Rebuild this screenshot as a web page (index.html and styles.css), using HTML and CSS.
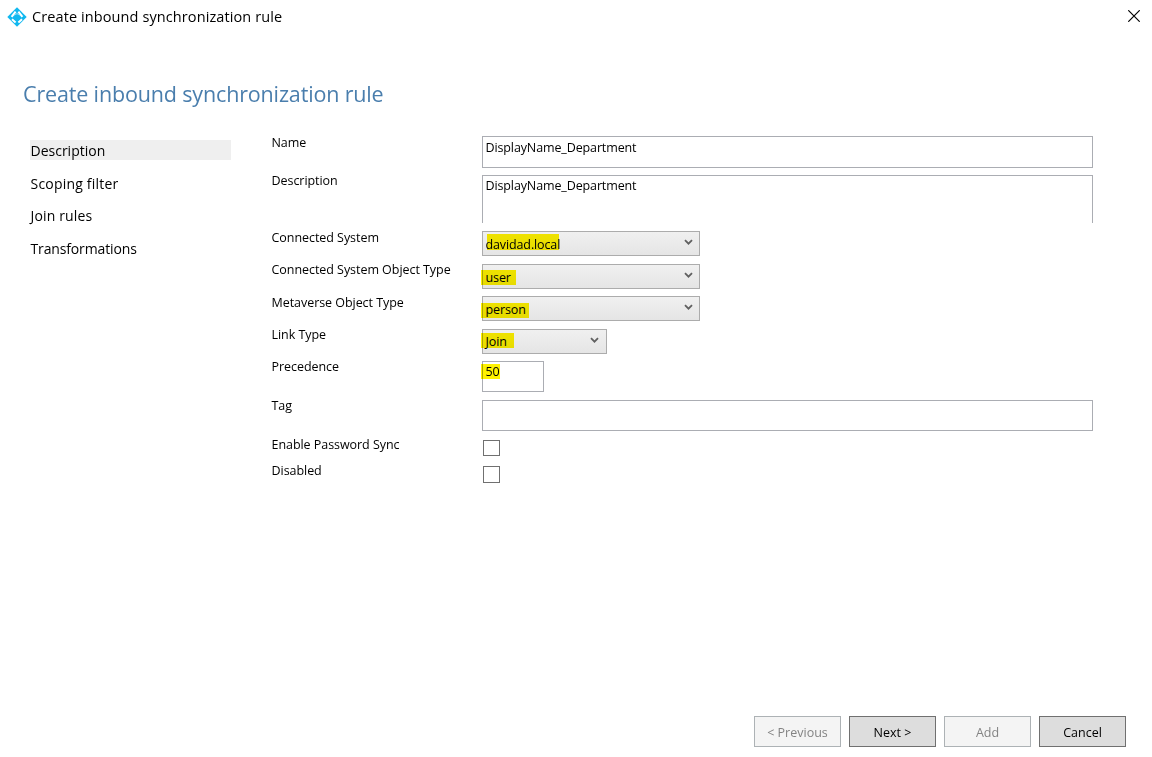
FILE: index.html
```html
<!DOCTYPE html>
<html lang="en">
<head>
    <meta charset="UTF-8">
    <title>Create inbound synchronization rule</title>
    <link rel="stylesheet" href="styles.css">
</head>
<body>
    <div class="window">
        <header class="titlebar">
            <svg class="app-icon" width="20" height="20" viewBox="0 0 20 20">
                <path d="M10 .3 19.7 10 10 19.7 .3 10z" fill="#10b8f0"/>
                <path d="M8.6 4.6 4.6 9.8M11.4 4.6 15.4 9.8M5 12.2l3.6 3.2M15 12.2l-3.6 3.2" stroke="#fff" stroke-width="2" fill="none"/>
                <path d="M7.6 8.4 10 6.8l2.4 1.6" stroke="#fff" stroke-width="1" fill="none"/>
                <circle cx="10" cy="10.2" r="2.9" fill="#10b8f0"/>
            </svg>
            <span class="title">Create inbound synchronization rule</span>
            <svg class="close" width="12" height="12" viewBox="0 0 12 12">
                <path d="M.3.3l11.4 11.4M11.7.3.3 11.7" stroke="#000" stroke-width="1.2"/>
            </svg>
        </header>
        <h1>Create inbound synchronization rule</h1>
        <main>
            <nav>
                <a class="active"><span class="nav-description">Description</span></a>
                <a><span class="nav-scoping">Scoping filter</span></a>
                <a><span class="nav-join">Join rules</span></a>
                <a><span class="nav-transform">Transformations</span></a>
            </nav>
            <div class="form">
                <label>Name</label>
                <div class="input"><span>DisplayName_Department</span></div>
                <label class="up">Description</label>
                <div class="input area"><span>DisplayName_Department</span></div>
                <label>Connected System</label>
                <div class="select mark mark-system"><span>davidad.local</span><svg class="arrow" width="9" height="7" viewBox="0 0 9 7"><path d="M1 1.2 4.5 4.7 8 1.2"/></svg></div>
                <label class="up">Connected System Object Type</label>
                <div class="select mark mark-user"><span>user</span><svg class="arrow" width="9" height="7" viewBox="0 0 9 7"><path d="M1 1.2 4.5 4.7 8 1.2"/></svg></div>
                <label>Metaverse Object Type</label>
                <div class="select mark mark-person"><span>person</span><svg class="arrow" width="9" height="7" viewBox="0 0 9 7"><path d="M1 1.2 4.5 4.7 8 1.2"/></svg></div>
                <label class="up">Link Type</label>
                <div class="select short mark mark-join"><span>Join</span><svg class="arrow" width="9" height="7" viewBox="0 0 9 7"><path d="M1 1.2 4.5 4.7 8 1.2"/></svg></div>
                <label class="up">Precedence</label>
                <div class="input number mark mark-number"><span>50</span></div>
                <label class="up">Tag</label>
                <div class="input tag"></div>
                <label class="up2">Enable Password Sync</label>
                <div class="checkbox sync"></div>
                <label class="up2">Disabled</label>
                <div class="checkbox"></div>
            </div>
        </main>
        <footer>
            <button disabled>&lt; Previous</button>
            <button>Next &gt;</button>
            <button disabled>Add</button>
            <button>Cancel</button>
        </footer>
    </div>
</body>
</html>
```

FILE: styles.css
```css
* {
    margin: 0;
    padding: 0;
    box-sizing: border-box;
}
body {
    font-family: "Open Sans", sans-serif;
    font-size: 12.5px;
    color: #000;
    background: #fff;
}
.window {
    display: flex;
    flex-direction: column;
    width: 1152px;
    height: 757px;
    overflow: hidden;
}
.titlebar {
    display: flex;
    align-items: center;
    height: 33px;
    padding: 0 12px 0 7px;
}
.title {
    margin-left: 5px;
    font-size: 14.5px;
    letter-spacing: 0.1px;
    white-space: nowrap;
}
.close {
    margin: -1px 0 0 auto;
}
h1 {
    height: 32px;
    margin: 45px 0 0 23px;
    font-size: 21.5px;
    font-weight: 400;
    line-height: 32px;
    letter-spacing: -0.15px;
    color: #4a7ead;
}
main {
    display: flex;
    flex: 1;
    padding: 26px 0 0 30px;
}
nav {
    display: flex;
    flex-direction: column;
    gap: 12.6px;
    width: 201px;
    margin: 4px 40.5px 0 0;
}
nav a {
    height: 20px;
    padding-left: 0.5px;
    font-size: 14px;
    line-height: 22px;
}
.nav-scoping {
    letter-spacing: 0.2px;
}
.nav-join {
    letter-spacing: 0.15px;
}
.nav-transform {
    letter-spacing: -0.14px;
}
.active {
    background: #efefef;
}
.form {
    display: grid;
    grid-template-columns: 210.5px 611px;
    grid-template-rows: 39px 56px 33px 32px 33px 32px 39px 40px 26px 17px;
    align-items: start;
    align-content: start;
}
label {
    line-height: 13px;
    letter-spacing: -0.05px;
    white-space: nowrap;
}
.up {
    margin-top: -1px;
}
.up2 {
    margin-top: -2px;
}
.input {
    height: 32px;
    padding: 2px 3px 2px 2.5px;
    border: 1px solid #abadb3;
    line-height: 18px;
    letter-spacing: -0.12px;
}
.area {
    height: 48px;
    padding-top: 1px;
    border-bottom: none;
}
.number {
    width: 62px;
    height: 31px;
    padding-top: 1px;
}
.tag {
    height: 31px;
}
.select {
    display: flex;
    align-items: center;
    justify-content: space-between;
    width: 218px;
    height: 25px;
    padding: 3px 6px 0 2.5px;
    border: 1px solid #acacac;
    background: linear-gradient(#f0f0f0, #e5e5e5);
    line-height: 18px;
    letter-spacing: -0.12px;
}
.short {
    width: 125px;
    padding: 1px 7px 0 2.5px;
}
.arrow {
    margin-top: -5px;
}
.short .arrow {
    margin-top: -3px;
}
.arrow path {
    fill: none;
    stroke: #606060;
    stroke-width: 1.8;
}
/* yellow marker strokes over the values */
.mark {
    position: relative;
}
.mark::after {
    content: "";
    position: absolute;
    left: -2px;
    height: 15px;
    background: #fff200;
    mix-blend-mode: multiply;
}
.mark-system::after {
    top: 2px;
    left: 4px;
    width: 72px;
    height: 16px;
}
.mark-user::after {
    top: 5px;
    width: 35px;
}
.mark-person::after {
    top: 6px;
    width: 48px;
}
.mark-join::after {
    top: 3px;
    width: 33px;
}
.mark-number::after {
    top: 2px;
    width: 19px;
}
.checkbox {
    width: 17px;
    height: 17px;
    margin-left: 1px;
    border: 1px solid #707070;
}
.sync {
    height: 16px;
}
footer {
    display: flex;
    justify-content: flex-end;
    gap: 8px;
    padding: 0 26px 10px 0;
}
button {
    width: 87px;
    height: 31px;
    padding-top: 2px;
    border: 1px solid #707070;
    background: #ddd;
    font-family: inherit;
    font-size: 12.5px;
    color: #000;
}
button:disabled {
    border-color: #adb2b5;
    background: #f4f4f4;
    color: #838383;
}
```
